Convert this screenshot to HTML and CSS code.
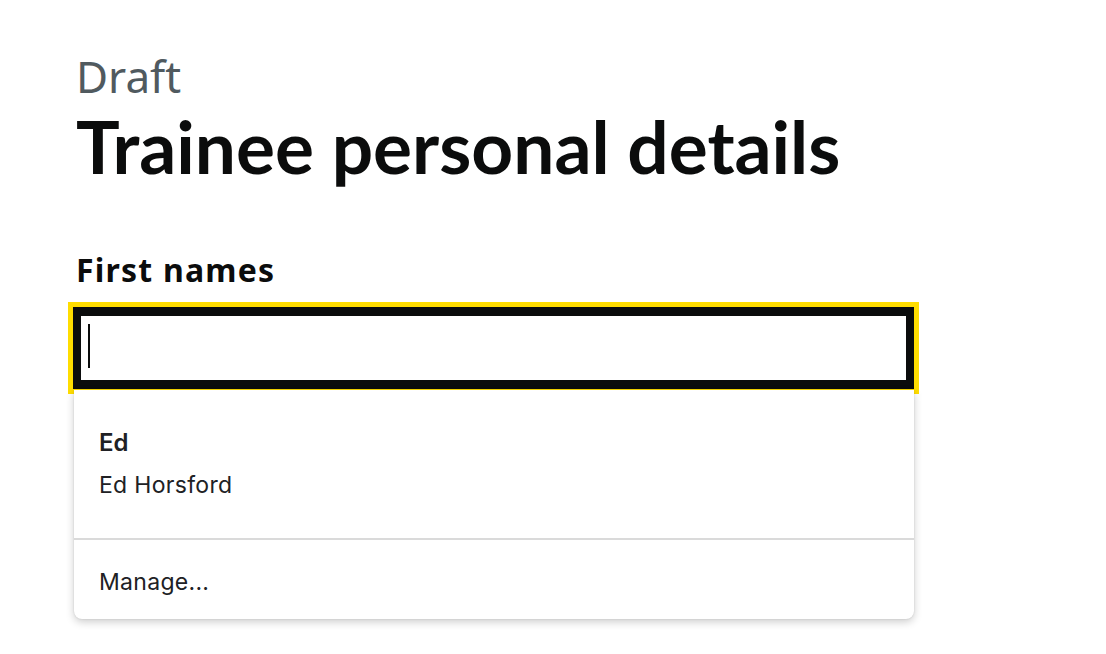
FILE: index.html
```html
<!DOCTYPE html>
<html lang="en">
<head>
<meta charset="utf-8">
<title>Trainee personal details</title>
<link rel="stylesheet" href="styles.css">
</head>
<body>
<main class="page">
  <span class="caption">Draft</span>
  <h1 class="title">Trainee personal details</h1>
  <div class="field">
    <label class="label" for="first-names">First names</label>
    <div class="input" id="first-names"><span class="caret"></span></div>
    <div class="popup">
      <div class="popup-item">
        <span class="popup-main">Ed</span>
        <span class="popup-sub">Ed Horsford</span>
      </div>
      <div class="popup-divider"></div>
      <div class="popup-manage">Manage...</div>
    </div>
  </div>
</main>
</body>
</html>
```
FILE: styles.css
```css
html, body {
  margin: 0;
  padding: 0;
  background: #ffffff;
}
body {
  min-height: 654px;
}
.page {
  padding: 54px 0 36px 76px;
  font-family: "Noto Sans", "Open Sans", sans-serif;
  color: #0b0c0c;
}
.caption {
  display: block;
  font-size: 44px;
  line-height: 44px;
  color: #505a5f;
  font-weight: 400;
  margin-bottom: 8px;
}
.title {
  margin: 0;
  font-family: Lato, "Noto Sans", sans-serif;
  font-size: 73px;
  line-height: 80px;
  font-weight: 700;
}
.field {
  margin-top: 64px;
  width: 841px;
  margin-left: -3px;
}
.label {
  display: block;
  margin-left: 3px;
  font-size: 32px;
  line-height: 40px;
  font-weight: 700;
  letter-spacing: 1.2px;
  margin-bottom: 17px;
}
.input {
  box-sizing: border-box;
  height: 82px;
  border: 8px solid #0b0c0c;
  border-top-width: 9px;
  border-bottom-width: 9px;
  outline: 5px solid #ffdd00;
  display: flex;
  align-items: center;
  padding-left: 7px;
}
.caret {
  width: 2px;
  height: 44px;
  margin-top: -4px;
  background: #0b0c0c;
}
.popup {
  position: relative;
  z-index: 2;
  margin: 1px 0 0 1px;
  width: 840px;
  height: 229px;
  background: #ffffff;
  border-radius: 0 0 8px 8px;
  box-shadow: 0 3px 8px rgba(0, 0, 0, 0.2), 0 0 2px rgba(0, 0, 0, 0.12);
  font-family: Inter, "Liberation Sans", sans-serif;
  color: #202124;
  display: flex;
  flex-direction: column;
}
.popup-item {
  height: 148px;
  box-sizing: border-box;
  padding: 39px 0 0 25px;
  display: flex;
  flex-direction: column;
  gap: 14px;
}
.popup-main {
  font-size: 24px;
  line-height: 28px;
  font-weight: 600;
}
.popup-sub {
  font-size: 23px;
  line-height: 28px;
  letter-spacing: 0.3px;
}
.popup-divider {
  height: 2px;
  background: #dadada;
}
.popup-manage {
  padding: 28px 0 0 25px;
  font-size: 23px;
  line-height: 28px;
  letter-spacing: 0.3px;
}
```
